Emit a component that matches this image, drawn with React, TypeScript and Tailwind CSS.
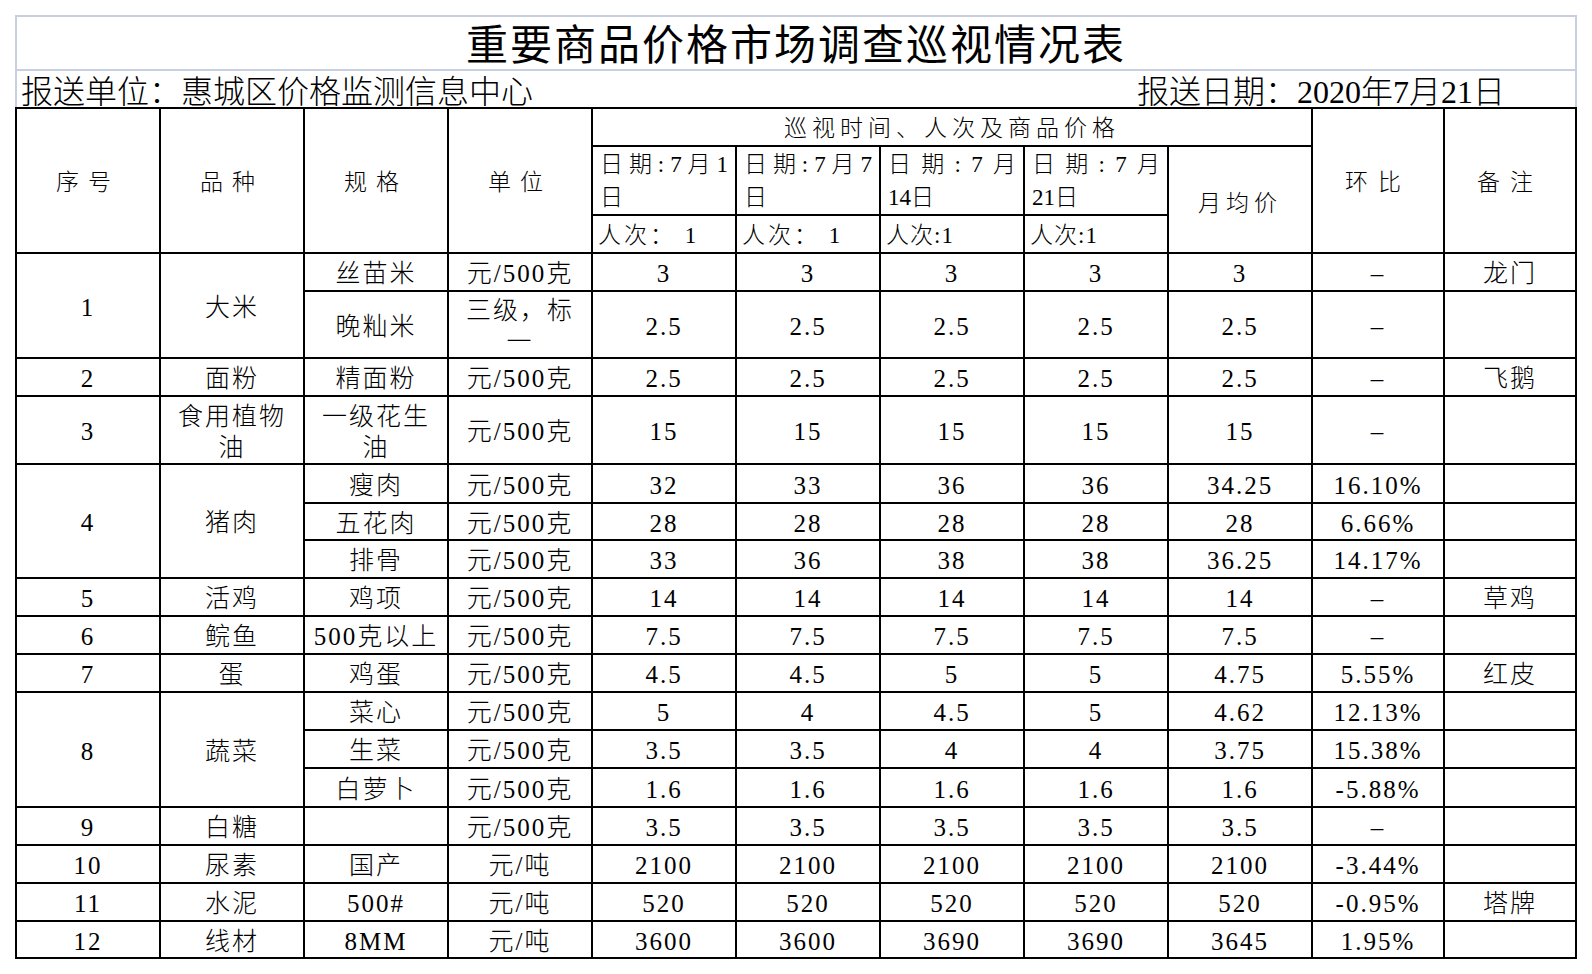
import type { ReactNode } from 'react';

type Span = { text: ReactNode; span: number };
type Row = {
  h: string;
  no?: Span;
  kind?: Span;
  spec: ReactNode;
  unit: ReactNode;
  prices: string[];
  avg: string;
  ratio: string;
  note: string;
};

const rows: Row[] = [
  { h: 'h-[38px]', no: { text: '1', span: 2 }, kind: { text: '大米', span: 2 }, spec: '丝苗米', unit: '元/500克', prices: ['3', '3', '3', '3'], avg: '3', ratio: '–', note: '龙门' },
  { h: 'h-[67px]', spec: '晚籼米', unit: <>三级，标<br />一</>, prices: ['2.5', '2.5', '2.5', '2.5'], avg: '2.5', ratio: '–', note: '' },
  { h: 'h-[38px]', no: { text: '2', span: 1 }, kind: { text: '面粉', span: 1 }, spec: '精面粉', unit: '元/500克', prices: ['2.5', '2.5', '2.5', '2.5'], avg: '2.5', ratio: '–', note: '飞鹅' },
  { h: 'h-[68px]', no: { text: '3', span: 1 }, kind: { text: <>食用植物<br />油</>, span: 1 }, spec: <>一级花生<br />油</>, unit: '元/500克', prices: ['15', '15', '15', '15'], avg: '15', ratio: '–', note: '' },
  { h: 'h-[39px]', no: { text: '4', span: 3 }, kind: { text: '猪肉', span: 3 }, spec: '瘦肉', unit: '元/500克', prices: ['32', '33', '36', '36'], avg: '34.25', ratio: '16.10%', note: '' },
  { h: 'h-[37px]', spec: '五花肉', unit: '元/500克', prices: ['28', '28', '28', '28'], avg: '28', ratio: '6.66%', note: '' },
  { h: 'h-[38px]', spec: '排骨', unit: '元/500克', prices: ['33', '36', '38', '38'], avg: '36.25', ratio: '14.17%', note: '' },
  { h: 'h-[38px]', no: { text: '5', span: 1 }, kind: { text: '活鸡', span: 1 }, spec: '鸡项', unit: '元/500克', prices: ['14', '14', '14', '14'], avg: '14', ratio: '–', note: '草鸡' },
  { h: 'h-[38px]', no: { text: '6', span: 1 }, kind: { text: '鲩鱼', span: 1 }, spec: '500克以上', unit: '元/500克', prices: ['7.5', '7.5', '7.5', '7.5'], avg: '7.5', ratio: '–', note: '' },
  { h: 'h-[38px]', no: { text: '7', span: 1 }, kind: { text: '蛋', span: 1 }, spec: '鸡蛋', unit: '元/500克', prices: ['4.5', '4.5', '5', '5'], avg: '4.75', ratio: '5.55%', note: '红皮' },
  { h: 'h-[38px]', no: { text: '8', span: 3 }, kind: { text: '蔬菜', span: 3 }, spec: '菜心', unit: '元/500克', prices: ['5', '4', '4.5', '5'], avg: '4.62', ratio: '12.13%', note: '' },
  { h: 'h-[38px]', spec: '生菜', unit: '元/500克', prices: ['3.5', '3.5', '4', '4'], avg: '3.75', ratio: '15.38%', note: '' },
  { h: 'h-[39px]', spec: '白萝卜', unit: '元/500克', prices: ['1.6', '1.6', '1.6', '1.6'], avg: '1.6', ratio: '-5.88%', note: '' },
  { h: 'h-[38px]', no: { text: '9', span: 1 }, kind: { text: '白糖', span: 1 }, spec: '', unit: '元/500克', prices: ['3.5', '3.5', '3.5', '3.5'], avg: '3.5', ratio: '–', note: '' },
  { h: 'h-[38px]', no: { text: '10', span: 1 }, kind: { text: '尿素', span: 1 }, spec: '国产', unit: '元/吨', prices: ['2100', '2100', '2100', '2100'], avg: '2100', ratio: '-3.44%', note: '' },
  { h: 'h-[38px]', no: { text: '11', span: 1 }, kind: { text: '水泥', span: 1 }, spec: '500#', unit: '元/吨', prices: ['520', '520', '520', '520'], avg: '520', ratio: '-0.95%', note: '塔牌' },
  { h: 'h-[37px]', no: { text: '12', span: 1 }, kind: { text: '线材', span: 1 }, spec: '8MM', unit: '元/吨', prices: ['3600', '3600', '3690', '3690'], avg: '3645', ratio: '1.95%', note: '' },
];

const cell = 'border-r-2 border-b-2 border-black text-center align-middle p-0 pt-[3px] text-[25px] leading-[31px] tracking-[2px] whitespace-nowrap';
const head = 'border-r-2 border-b-2 border-black text-center align-middle p-0 pt-[3px] text-[23px] leading-[33px]';

function DateCell({ first, second }: { first: string[]; second: string }) {
  return (
    <td className="border-r-2 border-b-2 border-black align-middle px-[7px] pt-[1px] text-[23px] leading-[33px]">
      <div className="flex justify-between">
        {first.map((c, i) => (
          <span key={i}>{c}</span>
        ))}
      </div>
      <div className="text-left">{second}</div>
    </td>
  );
}

export default function App() {
  return (
    <div className="min-h-screen bg-white font-['Liberation_Serif','Noto_Sans_CJK_SC',serif] text-black">
      <div className="pt-[15px] pl-[15px] w-[1577px]">
        <div className="h-[56px] border-2 border-[#c8cfe0] flex items-center justify-center pt-[5px]">
          <h1 className="text-[42px] leading-none tracking-[2px]">重要商品价格市场调查巡视情况表</h1>
        </div>
        <div className="h-[36px] border-x-2 border-[#c8cfe0] flex items-center justify-between pl-[4px] pr-[70px] pt-[5px] text-[32px] leading-none font-light whitespace-nowrap">
          <span>报送单位：惠城区价格监测信息中心</span>
          <span>报送日期：2020年7月21日</span>
        </div>
        <table className="w-[1562px] table-fixed border-separate border-spacing-0 border-l-2 border-t-2 border-black font-light">
          <colgroup>
            <col className="w-[144px]" />
            <col className="w-[144px]" />
            <col className="w-[144px]" />
            <col className="w-[144px]" />
            <col className="w-[144px]" />
            <col className="w-[144px]" />
            <col className="w-[144px]" />
            <col className="w-[144px]" />
            <col className="w-[144px]" />
            <col className="w-[132px]" />
            <col className="w-[132px]" />
          </colgroup>
          <thead>
            <tr className="h-[38px]">
              <th rowSpan={3} className={`${head} font-light tracking-[9px]`}>序号</th>
              <th rowSpan={3} className={`${head} font-light tracking-[9px]`}>品种</th>
              <th rowSpan={3} className={`${head} font-light tracking-[9px]`}>规格</th>
              <th rowSpan={3} className={`${head} font-light tracking-[9px]`}>单位</th>
              <th colSpan={5} className={`${head} font-light tracking-[5px]`}>巡视时间、人次及商品价格</th>
              <th rowSpan={3} className={`${head} font-light tracking-[10px]`}>环比</th>
              <th rowSpan={3} className={`${head} font-light tracking-[10px]`}>备注</th>
            </tr>
            <tr className="h-[68px]">
              <DateCell first={['日', '期', ':', '7', '月', '1']} second="日" />
              <DateCell first={['日', '期', ':', '7', '月', '7']} second="日" />
              <DateCell first={['日', '期', ':', '7', '月']} second="14日" />
              <DateCell first={['日', '期', ':', '7', '月']} second="21日" />
              <th rowSpan={2} className={`${head} font-light tracking-[5px] pt-[8px]`}>月均价</th>
            </tr>
            <tr className="h-[38px]">
              <td className="border-r-2 border-b-2 border-black align-middle pl-[5px] pt-[3px] text-[23px] leading-[31px] tracking-[3px] whitespace-nowrap">人次：&nbsp;1</td>
              <td className="border-r-2 border-b-2 border-black align-middle pl-[5px] pt-[3px] text-[23px] leading-[31px] tracking-[3px] whitespace-nowrap">人次：&nbsp;1</td>
              <td className="border-r-2 border-b-2 border-black align-middle pl-[5px] pt-[3px] text-[23px] leading-[31px] tracking-[1px] whitespace-nowrap">人次:1</td>
              <td className="border-r-2 border-b-2 border-black align-middle pl-[5px] pt-[3px] text-[23px] leading-[31px] tracking-[1px] whitespace-nowrap">人次:1</td>
            </tr>
          </thead>
          <tbody>
            {rows.map((r, i) => (
              <tr key={i} className={r.h}>
                {r.no && (
                  <td rowSpan={r.no.span} className={cell}>
                    {r.no.text}
                  </td>
                )}
                {r.kind && (
                  <td rowSpan={r.kind.span} className={cell}>
                    {r.kind.text}
                  </td>
                )}
                <td className={cell}>{r.spec}</td>
                <td className={cell}>{r.unit}</td>
                {r.prices.map((p, j) => (
                  <td key={j} className={cell}>
                    {p}
                  </td>
                ))}
                <td className={cell}>{r.avg}</td>
                <td className={cell}>{r.ratio}</td>
                <td className={cell}>{r.note}</td>
              </tr>
            ))}
          </tbody>
        </table>
      </div>
    </div>
  );
}
